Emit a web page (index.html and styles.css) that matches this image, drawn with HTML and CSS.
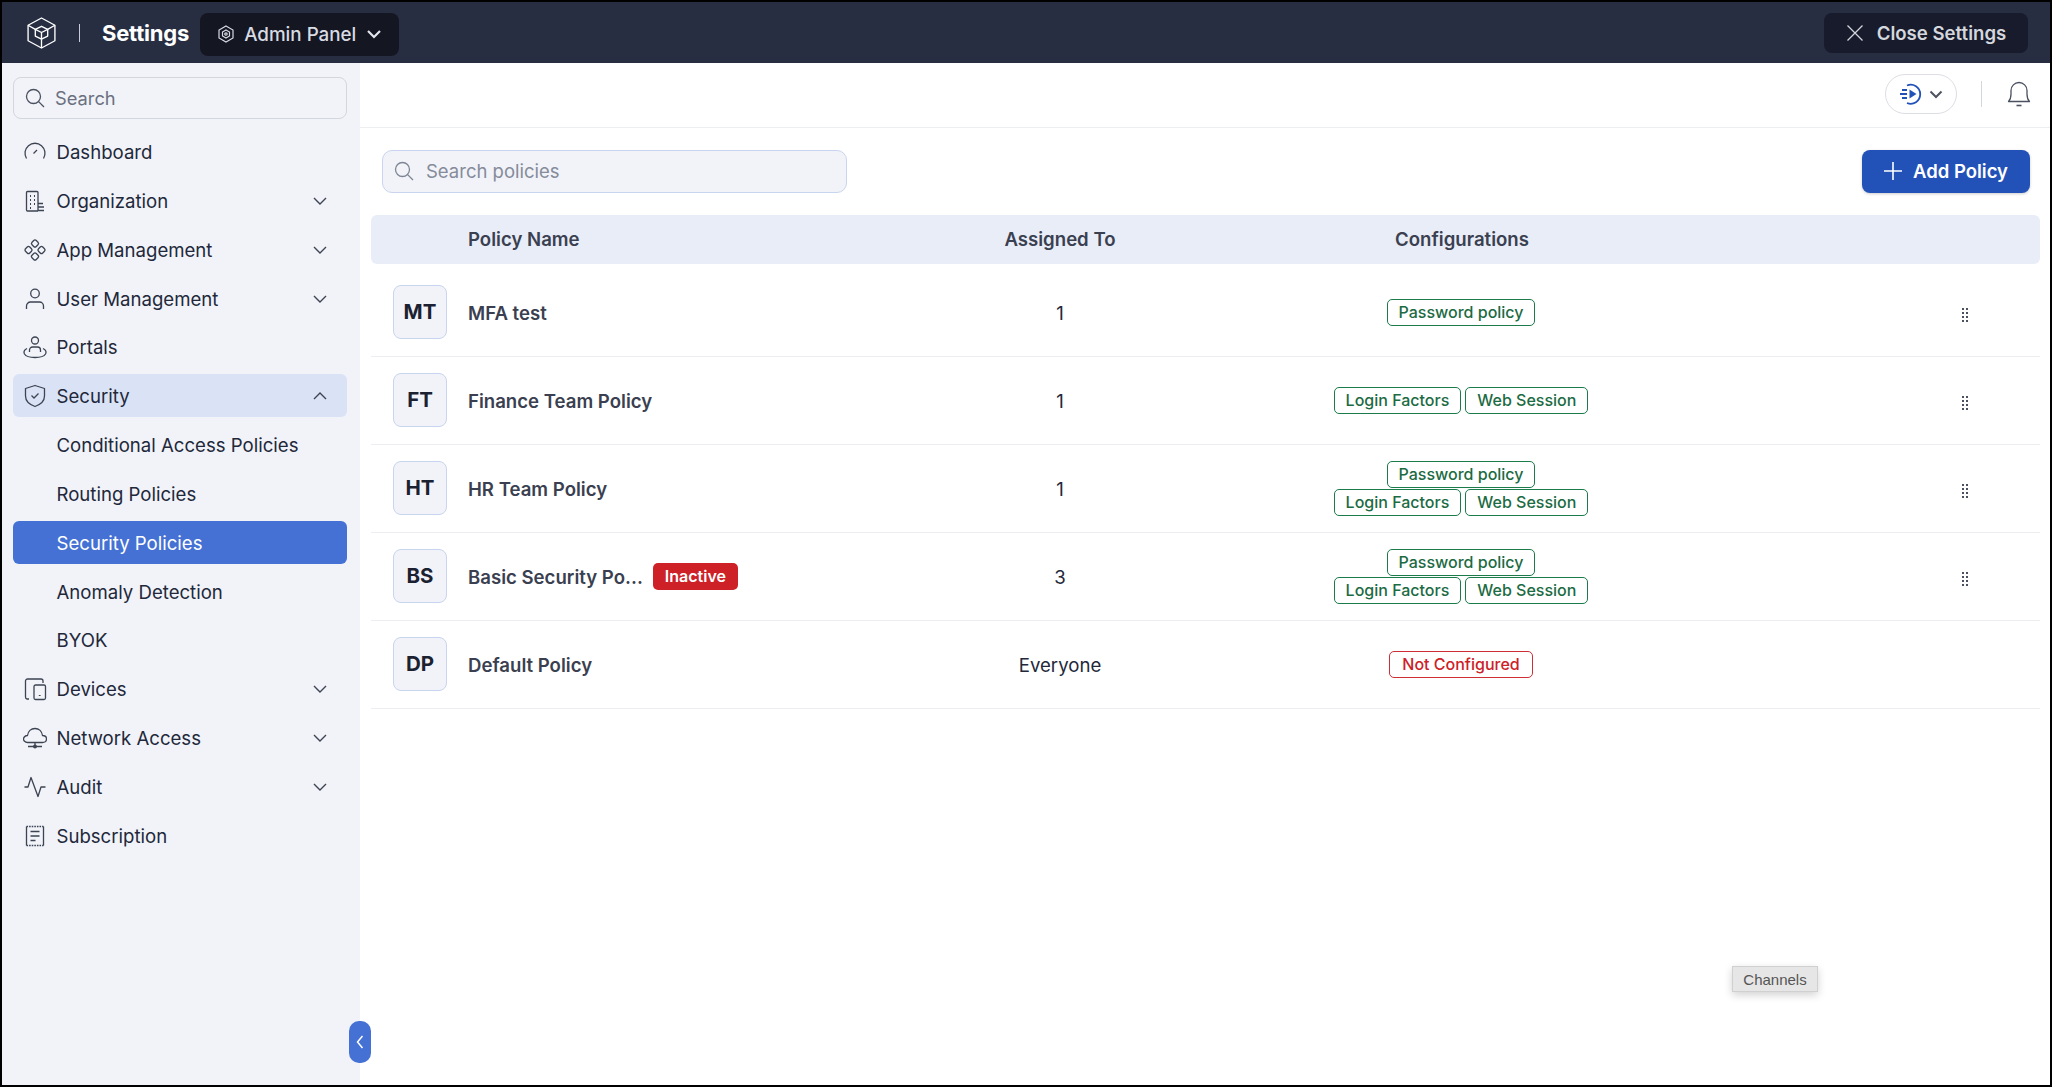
FILE: index.html
```html
<!DOCTYPE html>
<html lang="en">
<head>
    <meta charset="UTF-8">
    <title>Settings - Security Policies</title>
    <link rel="stylesheet" href="styles.css">
</head>
<body>
    <div class="app">
        <header class="topbar">
            <svg class="logo" viewBox="1 .5 28 31" fill="none" stroke="#fff" stroke-width="1.3" stroke-linejoin="round">
                <path d="M15 1.5 28 8.5V23.5L15 30.5 2 23.5V8.5Z"/>
                <path d="M2 8.5 9 12.5M28 8.5 21 12.5M15 30.5V22"/>
                <path d="M15 9.5 21 12.5V19L15 22 9 19V12.5Z"/>
                <path d="M9 12.5 15 15.5 21 12.5M15 15.5V22"/>
            </svg>
            <span class="topbar-divider"></span>
            <span class="topbar-title">Settings</span>
            <div class="panel-switch">
                <svg class="panel-icon" viewBox="0 0 18 18" fill="none" stroke="#d8dbe3" stroke-width="1.2">
                    <path d="M9 1 16 5V13L9 17 2 13V5Z"/>
                    <path d="M9 5 12.5 7V11L9 13 5.5 11V7Z"/>
                    <circle cx="9" cy="9" r="1.2"/>
                </svg>
                <span>Admin Panel</span>
                <svg class="panel-caret" viewBox="0 0 16 10" fill="none" stroke="#e4e6ec" stroke-width="2.2"><path d="M2 2 8 8 14 2"/></svg>
            </div>
            <div class="close-settings">
                <svg class="close-icon" viewBox="0 0 18 18" fill="none" stroke="#d5d7de" stroke-width="1.3"><path d="M1.5 1.5 16.5 16.5M16.5 1.5 1.5 16.5"/></svg>
                <span>Close Settings</span>
            </div>
        </header>

        <div class="body-wrap">
            <aside class="sidebar">
                <div class="side-search">
                    <svg class="search-icon" viewBox="0 0 20 20" fill="none" stroke="#4b5160" stroke-width="1.3"><circle cx="8.5" cy="8.5" r="7"/><path d="M13.6 13.6 19 19"/></svg>
                    <span>Search</span>
                </div>
                <nav class="nav">
                    <a class="nav-item">
                        <svg class="nav-icon" viewBox="0 0 24 24" fill="none" stroke="#3d4352" stroke-width="1.3"><path d="M3.5 18.5A10 10 0 1 1 20.5 18.5"/><path d="M10.5 13.5 14 10"/></svg>
                        <span>Dashboard</span>
                    </a>
                    <a class="nav-item">
                        <svg class="nav-icon" viewBox="0 0 24 24" fill="none" stroke="#3d4352" stroke-width="1.3"><path d="M15 22H4.500A1 1 0 0 1 3.500 21V3.500A1 1 0 0 1 4.500 2.500H14A1 1 0 0 1 15 3.500V22M15 14.500H20M15 18H21M15 21.500H21"/><path d="M7 7H8M11 7H12M7 11H8M11 11H12M7 15H8M11 15H12M7 19H8" stroke-width="1.800"/></svg>
                        <span>Organization</span>
                        <svg class="chevron" viewBox="0 0 14 8" fill="none" stroke="#3d4352" stroke-width="1.400"><path d="M1 1 7 7 13 1"/></svg>
                    </a>
                    <a class="nav-item">
                        <svg class="nav-icon" viewBox="0 0 24 24" fill="none" stroke="#3d4352" stroke-width="1.300">
                            <rect x="9" y="2.500" width="6" height="6" rx="1.800" transform="rotate(45 12 5.500)"/>
                            <rect x="9" y="15.500" width="6" height="6" rx="1.800" transform="rotate(45 12 18.500)"/>
                            <rect x="2.500" y="9" width="6" height="6" rx="1.800" transform="rotate(45 5.500 12)"/>
                            <rect x="15.500" y="9" width="6" height="6" rx="1.800" transform="rotate(45 18.500 12)"/>
                        </svg>
                        <span>App Management</span>
                        <svg class="chevron" viewBox="0 0 14 8" fill="none" stroke="#3d4352" stroke-width="1.400"><path d="M1 1 7 7 13 1"/></svg>
                    </a>
                    <a class="nav-item">
                        <svg class="nav-icon" viewBox="0 0 24 24" fill="none" stroke="#3d4352" stroke-width="1.300"><circle cx="12" cy="6.500" r="4.300"/><path d="M3.500 22V19A4 4 0 0 1 7.500 15H16.500A4 4 0 0 1 20.500 19V22"/></svg>
                        <span>User Management</span>
                        <svg class="chevron" viewBox="0 0 14 8" fill="none" stroke="#3d4352" stroke-width="1.400"><path d="M1 1 7 7 13 1"/></svg>
                    </a>
                    <a class="nav-item">
                        <svg class="nav-icon" viewBox="0 0 24 24" fill="none" stroke="#3d4352" stroke-width="1.300"><circle cx="12" cy="5.500" r="3.500"/><path d="M6.500 17V15A3 3 0 0 1 9.500 12H14.500A3 3 0 0 1 17.500 15V17"/><path d="M4 13.500C1 15 .5 17 1.500 19 3 21.500 7.500 22.500 12 22.500S21 21.500 22.500 19C23.500 17 23 15 20 13.500"/></svg>
                        <span>Portals</span>
                    </a>
                    <a class="nav-item open">
                        <svg class="nav-icon" viewBox="0 0 24 24" fill="none" stroke="#3d4352" stroke-width="1.300"><path d="M12 1.500 21.500 4.500V12C21.500 17 17.500 20.500 12 22.500 6.500 20.500 2.500 17 2.500 12V4.500Z" stroke-linejoin="round"/><path d="M8.500 11.500 11 14 15.500 9.500"/></svg>
                        <span>Security</span>
                        <svg class="chevron" viewBox="0 0 14 8" fill="none" stroke="#3d4352" stroke-width="1.400"><path d="M1 7 7 1 13 7"/></svg>
                    </a>
                    <a class="nav-item sub">Conditional Access Policies</a>
                    <a class="nav-item sub">Routing Policies</a>
                    <a class="nav-item sub active">Security Policies</a>
                    <a class="nav-item sub">Anomaly Detection</a>
                    <a class="nav-item sub">BYOK</a>
                    <a class="nav-item">
                        <svg class="nav-icon" viewBox="0 0 24 24" fill="none" stroke="#3d4352" stroke-width="1.300"><path d="M6 22H4A2 2 0 0 1 2.500 20V4A2 2 0 0 1 4.500 2H18A2 2 0 0 1 20 4V6"/><rect x="11" y="8" width="11.500" height="14.500" rx="1.500"/><path d="M16.700 18V19" stroke-width="1.800"/></svg>
                        <span>Devices</span>
                        <svg class="chevron" viewBox="0 0 14 8" fill="none" stroke="#3d4352" stroke-width="1.400"><path d="M1 1 7 7 13 1"/></svg>
                    </a>
                    <a class="nav-item">
                        <svg class="nav-icon" viewBox="0 0 24 24" fill="none" stroke="#3d4352" stroke-width="1.300"><path d="M6 16.500H4.500C2 16.500.5 14.500.5 13S2 9.500 4.500 9.500C5 5.500 8 2.500 12 2.500S19 5.500 19.500 9.500C22 9.500 23.500 11 23.500 13S22 16.500 19.500 16.500Z" stroke-linejoin="round"/><path d="M12 16.500V22M5 20.500H19"/><circle cx="12" cy="20.500" r="1.300" fill="#3d4352"/></svg>
                        <span>Network Access</span>
                        <svg class="chevron" viewBox="0 0 14 8" fill="none" stroke="#3d4352" stroke-width="1.400"><path d="M1 1 7 7 13 1"/></svg>
                    </a>
                    <a class="nav-item">
                        <svg class="nav-icon" viewBox="0 0 24 24" fill="none" stroke="#3d4352" stroke-width="1.300"><path d="M1.500 12H5L8 2.500 15 21.500 18 12H22.500" stroke-linejoin="round"/></svg>
                        <span>Audit</span>
                        <svg class="chevron" viewBox="0 0 14 8" fill="none" stroke="#3d4352" stroke-width="1.400"><path d="M1 1 7 7 13 1"/></svg>
                    </a>
                    <a class="nav-item">
                        <svg class="nav-icon" viewBox="0 0 24 24" fill="none" stroke="#3d4352" stroke-width="1.300"><path d="M3.500 2.500V21.500M20.500 2.500V21.500"/><path d="M3.500 2.500H20.500M3.500 21.500H20.500" stroke-dasharray="1.600 1"/><path d="M7.500 7.500H16.500M7.500 12H16.500M7.500 16.500H12.500"/></svg>
                        <span>Subscription</span>
                    </a>
                </nav>
                <div class="collapse-handle">
                    <svg viewBox="0 0 8 14" fill="none" stroke="#fff" stroke-width="1.500"><path d="M6.500 1 1.500 7 6.500 13"/></svg>
                </div>
            </aside>

            <main class="main">
                <div class="main-top">
                    <div class="whats-new">
                        <svg class="play-icon" viewBox="0 0 24 24" fill="none" stroke="#2251b8" stroke-width="1.800">
                            <path d="M8 3.500A9.500 9.500 0 1 1 8 21"/>
                            <path d="M10.500 7.500 17.500 12 10.500 16.500Z" fill="#2251b8" stroke="none"/>
                            <path d="M3 8H8M1 12H8M3 16H8"/>
                        </svg>
                        <svg class="pill-caret" viewBox="0 0 14 9" fill="none" stroke="#4d5360" stroke-width="2"><path d="M1.500 1.500 7 7 12.500 1.500"/></svg>
                    </div>
                    <span class="top-divider"></span>
                    <svg class="bell" viewBox="0 0 24 26" fill="none" stroke="#4b5160" stroke-width="1.300">
                        <path d="M1.500 20.500C3.500 18.500 4 16.500 4 13V9.500A8 8 0 0 1 20 9.500V13C20 16.500 20.500 18.500 22.500 20.500Z" stroke-linejoin="round"/>
                        <path d="M9.500 24.500H14.500" stroke-width="1.600"/>
                    </svg>
                </div>

                <div class="toolbar">
                    <div class="policy-search">
                        <svg class="search-icon" viewBox="0 0 20 20" fill="none" stroke="#7e8594" stroke-width="1.300"><circle cx="8.500" cy="8.500" r="7"/><path d="M13.600 13.600 19 19"/></svg>
                        <span>Search policies</span>
                    </div>
                    <button class="add-btn">
                        <svg viewBox="0 0 18 18" fill="none" stroke="#fff" stroke-width="1.600"><path d="M9 0V18M0 9H18"/></svg>
                        Add Policy
                    </button>
                </div>

                <div class="table">
                    <div class="row head">
                        <span></span>
                        <span>Policy Name</span>
                        <span class="center">Assigned To</span>
                        <span class="center">Configurations</span>
                        <span></span>
                    </div>

                    <div class="row first">
                        <span class="avatar">MT</span>
                        <span class="name">MFA test</span>
                        <span class="center">1</span>
                        <div class="tags"><span class="tag">Password policy</span></div>
                        <svg class="dots" viewBox="0 0 6 14" fill="#4b5160"><path d="M0 0h2v2H0zM4 0h2v2H4zM0 4h2v2H0zM4 4h2v2H4zM0 8h2v2H0zM4 8h2v2H4zM0 12h2v2H0zM4 12h2v2H4z"/></svg>
                    </div>
                    <div class="row">
                        <span class="avatar">FT</span>
                        <span class="name">Finance Team Policy</span>
                        <span class="center">1</span>
                        <div class="tags"><span class="tag">Login Factors</span><span class="tag">Web Session</span></div>
                        <svg class="dots" viewBox="0 0 6 14" fill="#4b5160"><path d="M0 0h2v2H0zM4 0h2v2H4zM0 4h2v2H0zM4 4h2v2H4zM0 8h2v2H0zM4 8h2v2H4zM0 12h2v2H0zM4 12h2v2H4z"/></svg>
                    </div>
                    <div class="row">
                        <span class="avatar">HT</span>
                        <span class="name">HR Team Policy</span>
                        <span class="center">1</span>
                        <div class="tags"><span class="tag">Password policy</span><span class="tag">Login Factors</span><span class="tag">Web Session</span></div>
                        <svg class="dots" viewBox="0 0 6 14" fill="#4b5160"><path d="M0 0h2v2H0zM4 0h2v2H4zM0 4h2v2H0zM4 4h2v2H4zM0 8h2v2H0zM4 8h2v2H4zM0 12h2v2H0zM4 12h2v2H4z"/></svg>
                    </div>
                    <div class="row">
                        <span class="avatar">BS</span>
                        <div class="name-cell"><span class="name">Basic Security Po...</span><span class="badge">Inactive</span></div>
                        <span class="center">3</span>
                        <div class="tags"><span class="tag">Password policy</span><span class="tag">Login Factors</span><span class="tag">Web Session</span></div>
                        <svg class="dots" viewBox="0 0 6 14" fill="#4b5160"><path d="M0 0h2v2H0zM4 0h2v2H4zM0 4h2v2H0zM4 4h2v2H4zM0 8h2v2H0zM4 8h2v2H4zM0 12h2v2H0zM4 12h2v2H4z"/></svg>
                    </div>
                    <div class="row">
                        <span class="avatar">DP</span>
                        <span class="name">Default Policy</span>
                        <span class="center">Everyone</span>
                        <div class="tags"><span class="tag red">Not Configured</span></div>
                        <span></span>
                    </div>
                </div>

                <div class="tooltip">Channels</div>
            </main>
        </div>
    </div>
</body>
</html>
```

FILE: styles.css
```css
* {
    box-sizing: border-box;
}

body {
    margin: 0;
    font-family: Inter, "Noto Sans", sans-serif;
    background-color: #000;
}

.app {
    width: 2052px;
    height: 1087px;
    border: 2px solid #000;
    display: flex;
    flex-direction: column;
    background-color: #fff;
    overflow: hidden;
}

/* top bar */
.topbar {
    height: 61px;
    display: flex;
    align-items: center;
    padding: 1px 22px 0 25px;
    background-color: #282e42;
    flex-shrink: 0;
}

.logo {
    width: 29px;
    height: 32px;
}

.topbar-divider {
    width: 1px;
    height: 18px;
    margin: 0 22px 0 23px;
    background-color: #c9ccd6;
}

.topbar-title {
    color: #fff;
    font-size: 22px;
    font-weight: 700;
    letter-spacing: -0.2px;
}

.panel-switch {
    width: 199px;
    height: 43px;
    margin: 2px 0 0 11px;
    padding: 0 14px 0 17px;
    display: flex;
    align-items: center;
    border-radius: 8px;
    background-color: #141622;
    color: #d8dbe3;
    font-size: 18.800px;
    font-weight: 500;
}

.panel-icon {
    width: 18px;
    height: 18px;
    margin-right: 9px;
}

.panel-caret {
    width: 16px;
    height: 10px;
    margin-left: 10px;
}

.close-settings {
    width: 204px;
    height: 40px;
    margin-left: auto;
    display: flex;
    align-items: center;
    justify-content: center;
    border-radius: 8px;
    background-color: #171b2b;
    color: #d5d7de;
    font-size: 18.600px;
    font-weight: 600;
}

.close-icon {
    width: 18px;
    height: 18px;
    margin-right: 13px;
}

/* sidebar */
.body-wrap {
    flex: 1;
    display: flex;
    min-height: 0;
}

.sidebar {
    position: relative;
    width: 358px;
    padding: 14px 13px 0 11px;
    background-color: #f1f3f9;
    flex-shrink: 0;
}

.side-search {
    height: 42px;
    display: flex;
    align-items: center;
    padding-left: 11px;
    border: 1px solid #d4d6dd;
    border-radius: 8px;
    color: #6b7080;
    font-size: 18.300px;
}

.search-icon {
    width: 20px;
    height: 20px;
    margin-right: 10px;
}

.nav {
    display: flex;
    flex-direction: column;
    gap: 5.850px;
    margin-top: 11px;
}

.nav-item {
    height: 43px;
    display: flex;
    align-items: center;
    padding: 1px 20px 0 10px;
    border-radius: 6px;
    color: #22283a;
    font-size: 18.600px;
    font-weight: 400;
}

.nav-item.open {
    background-color: #dae3f5;
}

.nav-item.sub {
    padding-left: 43.500px;
}

.nav-item.active {
    background-color: #4471d3;
    color: #fff;
}

.nav-icon {
    width: 24px;
    height: 24px;
    margin-right: 9.500px;
    flex-shrink: 0;
}

.chevron {
    width: 14px;
    height: 8px;
    margin-left: auto;
}

.collapse-handle {
    position: absolute;
    left: 347px;
    top: 958px;
    width: 22px;
    height: 42px;
    display: flex;
    align-items: center;
    justify-content: center;
    border-radius: 10px;
    background-color: #4471d3;
    z-index: 2;
}

.collapse-handle svg {
    width: 8px;
    height: 14px;
}

/* main area */
.main {
    position: relative;
    flex: 1;
    min-width: 0;
}

.main-top {
    height: 65px;
    display: flex;
    align-items: center;
    justify-content: flex-end;
    padding: 0 19px 2px 0;
    border-bottom: 1px solid #eceef2;
}

.whats-new {
    width: 72px;
    height: 40px;
    display: flex;
    align-items: center;
    justify-content: center;
    gap: 6px;
    border: 1px solid #dcdee3;
    border-radius: 20px;
}

.play-icon {
    width: 24px;
    height: 24px;
}

.pill-caret {
    width: 14px;
    height: 9px;
}

.top-divider {
    width: 1px;
    height: 26px;
    margin: 0 25px 0 24px;
    background-color: #d5d7dc;
}

.bell {
    width: 24px;
    height: 26px;
}

.toolbar {
    display: flex;
    align-items: center;
    justify-content: space-between;
    padding: 22px 20px 0 22px;
}

.policy-search {
    width: 465px;
    height: 43px;
    display: flex;
    align-items: center;
    padding: 0 0 1px 11px;
    border: 1px solid #c9d4ee;
    border-radius: 10px;
    background-color: #f1f3f9;
    color: #858b99;
    font-size: 18.500px;
}

.policy-search .search-icon {
    margin-right: 12px;
}

.add-btn {
    width: 168px;
    height: 43px;
    display: flex;
    align-items: center;
    justify-content: center;
    gap: 11px;
    padding: 0 0 2px;
    border: none;
    border-radius: 8px;
    background-color: #2251b8;
    box-shadow: 0 1px 3px rgba(0,0,0,0.2);
    color: #fff;
    font-family: inherit;
    font-size: 18.500px;
    font-weight: 600;
}

.add-btn svg {
    width: 18px;
    height: 18px;
}

/* policy table */
.table {
    width: 1669px;
    margin: 22px 0 0 11px;
    color: #22283a;
    font-size: 18.600px;
}

.row {
    height: 88px;
    display: grid;
    grid-template-columns: 97px 412px 360px 444px 1fr;
    align-items: center;
    border-bottom: 1px solid #eceef2;
}

.row.first {
    margin-top: 5px;
}

.row.head {
    height: 49px;
    padding-bottom: 1px;
    border-bottom: none;
    border-radius: 6px;
    background-color: #e8edf8;
    color: #3a4050;
    font-weight: 600;
}

.center {
    text-align: center;
}

.avatar {
    width: 54px;
    height: 54px;
    margin: -1px 0 0 22px;
    padding-bottom: 2px;
    display: flex;
    align-items: center;
    justify-content: center;
    border: 1px solid #c9d4ee;
    border-radius: 8px;
    background-color: #f1f3f9;
    color: #1b2130;
    font-size: 20.500px;
    font-weight: 700;
}

.name {
    color: #3a4050;
    font-weight: 600;
}

.name-cell {
    display: flex;
    align-items: center;
    gap: 10px;
}

.badge {
    padding: 0 12px;
    height: 27px;
    line-height: 27px;
    border-radius: 5px;
    background-color: #cd2027;
    color: #fff;
    font-size: 16px;
    font-weight: 600;
}

.tags {
    display: flex;
    flex-wrap: wrap;
    justify-content: center;
    column-gap: 4px;
    row-gap: 1px;
    padding: 0 51px 0 49px;
}

.tags .tag:first-child:nth-last-child(3) {
    margin: 0 80px;
}

.tag {
    height: 27px;
    line-height: 25px;
    padding: 0 11px;
    border: 1px solid #1c7a4b;
    border-radius: 5px;
    color: #1c6b43;
    font-size: 16px;
    font-weight: 500;
    white-space: nowrap;
}

.tag.red {
    padding: 0 12px;
    border-color: #cd2f35;
    color: #cd2027;
}

.dots {
    width: 6px;
    height: 14px;
    justify-self: end;
    margin: 4px 72px 0 0;
}

.tooltip {
    position: absolute;
    left: 1372px;
    top: 903px;
    width: 86px;
    height: 26px;
    line-height: 25px;
    text-align: center;
    border: 1px solid #d0d0d0;
    background-color: #e6e6e6;
    box-shadow: 0 3px 8px rgba(0,0,0,0.18);
    color: #555;
    font-family: "Liberation Sans", Arial, sans-serif;
    font-size: 15px;
}
```
